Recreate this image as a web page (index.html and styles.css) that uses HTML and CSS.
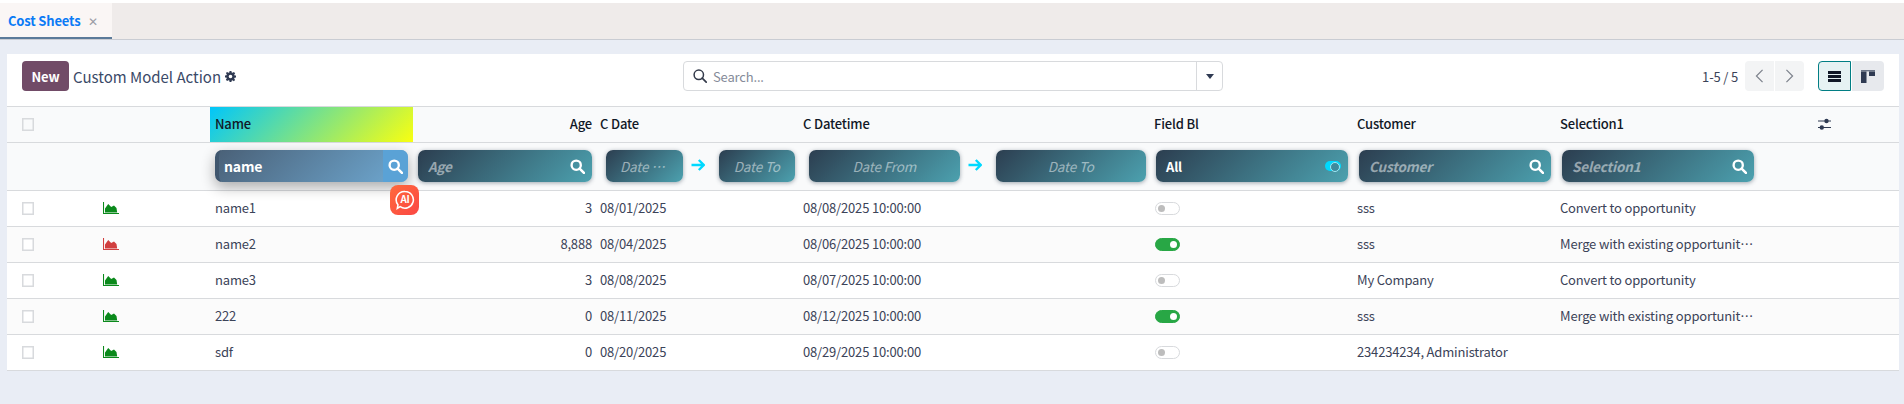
FILE: index.html
```html
<!DOCTYPE html>
<html lang="en">
<head>
<meta charset="utf-8">
<title>Cost Sheets</title>
<link rel="stylesheet" href="styles.css">
</head>
<body>
<svg class="defs" width="0" height="0" aria-hidden="true">
  <symbol id="i-search" viewBox="0 0 14 14"><circle cx="5.8" cy="5.8" r="4.3" fill="none" stroke="currentColor" stroke-width="2.2"/><path d="M9 9l4 4" fill="none" stroke="currentColor" stroke-width="2.4" stroke-linecap="round"/></symbol>
  <symbol id="i-thin" viewBox="0 0 14 14"><circle cx="5.8" cy="5.8" r="4.7" fill="none" stroke="currentColor" stroke-width="1.5"/><path d="M9.2 9.2l4 4" fill="none" stroke="currentColor" stroke-width="1.7" stroke-linecap="round"/></symbol>
  <symbol id="i-area" viewBox="0 0 16 12"><path d="M0.5 0v11.5H16" fill="none" stroke="currentColor" stroke-width="1.1"/><path d="M2 10.5V6.5L5.2 2 8.2 5 11 3.4 13.5 6 14.2 10.5Z" fill="currentColor"/></symbol>
  <symbol id="i-arrow" viewBox="0 0 14 12"><path d="M0.5 6h12M7.8 1l5 5-5 5" fill="none" stroke="currentColor" stroke-width="2.4"/></symbol>
</svg>

<nav class="tabbar">
  <div class="tab"><span class="tab-name">Cost Sheets</span><span class="tab-close">✕</span></div>
</nav>

<main class="page">
  <section class="card">
    <header class="panel">
      <div class="panel-left">
        <button class="btn-new">New</button>
        <span class="title">Custom Model Action</span>
        <svg class="gear" viewBox="0 0 12 12"><path fill-rule="evenodd" d="M5 0h2l.3 1.6 1 .4L9.7 1l1.4 1.4-1 1.4.4 1L12 5v2l-1.6.3-.4 1 1 1.4-1.4 1.4-1.4-1-1 .4L7 12H5l-.3-1.6-1-.4-1.4 1L.9 9.6l1-1.4-.4-1L0 7V5l1.6-.3.4-1-1-1.4L2.3 1l1.4 1 1-.4ZM6 4a2 2 0 1 0 0 4 2 2 0 0 0 0-4Z"/></svg>
      </div>
      <div class="searchbox">
        <svg class="search-ico"><use href="#i-thin"/></svg>
        <span class="search-ph">Search...</span>
        <span class="search-drop"><i class="caret"></i></span>
      </div>
      <div class="panel-right">
        <span class="pager-text">1-5 / 5</span>
        <div class="pager">
          <button class="pg"><svg viewBox="0 0 10 16"><path d="M8.5 1L1.5 8l7 7" fill="none" stroke="currentColor" stroke-width="1.4"/></svg></button>
          <button class="pg"><svg viewBox="0 0 10 16"><path d="M1.5 1l7 7-7 7" fill="none" stroke="currentColor" stroke-width="1.4"/></svg></button>
        </div>
        <div class="views">
          <button class="view active"><span class="bars"><i></i><i></i><i></i></span></button>
          <button class="view"><svg viewBox="0 0 14 13"><path d="M0 0h14v1.4H0z" fill="#6b7486"/><path d="M0 1.4h5.5V13H0zM8 1.4h6v4.6H8z" fill="#2f3a52"/></svg></button>
        </div>
      </div>
    </header>

    <table class="list">
      <colgroup>
        <col class="c-check"><col class="c-icon"><col class="c-name"><col class="c-age"><col class="c-date"><col class="c-dt"><col class="c-bl"><col class="c-cust"><col class="c-sel"><col class="c-opt">
      </colgroup>
      <thead>
        <tr class="head">
          <th><span class="check"></span></th>
          <th></th>
          <th class="th-name">Name</th>
          <th class="num">Age</th>
          <th>C Date</th>
          <th>C Datetime</th>
          <th>Field Bl</th>
          <th>Customer</th>
          <th>Selection1</th>
          <th class="opt"><svg class="sliders" viewBox="0 0 13 12"><path d="M0 3h13M0 9.5h13" stroke="#2f3a52" stroke-width="1"/><circle cx="8.5" cy="3" r="2.2" fill="#2f3a52"/><circle cx="3.8" cy="9.5" r="2.2" fill="#2f3a52"/></svg></th>
        </tr>
        <tr class="filters">
          <td></td>
          <td></td>
          <td class="fc fc-name">
            <div class="f f-focus"><span class="f-val">name</span><span class="f-btn"><svg><use href="#i-search"/></svg></span></div>
            <div class="ai-badge"><svg viewBox="0 0 20 20"><path d="M10 2.2a7.6 7.6 0 1 1-4.4 13.8L3 17.6l.6-3.2A7.6 7.6 0 0 1 10 2.2Z" fill="none" stroke="#fff" stroke-width="1.4"/><text x="10" y="13" text-anchor="middle" class="ai-text">AI</text></svg></div>
          </td>
          <td class="fc fc-age"><div class="f"><span class="f-ph">Age</span><svg class="f-ico"><use href="#i-search"/></svg></div></td>
          <td class="fc fc-range"><div class="range"><div class="f f-c"><span class="f-ph">Date From</span></div><svg class="arrow"><use href="#i-arrow"/></svg><div class="f f-c"><span class="f-ph">Date To</span></div></div></td>
          <td class="fc fc-range"><div class="range"><div class="f f-c"><span class="f-ph">Date From</span></div><svg class="arrow"><use href="#i-arrow"/></svg><div class="f f-c"><span class="f-ph">Date To</span></div></div></td>
          <td class="fc"><div class="f"><span class="f-all">All</span><span class="mini-toggle"></span></div></td>
          <td class="fc"><div class="f"><span class="f-ph">Customer</span><svg class="f-ico"><use href="#i-search"/></svg></div></td>
          <td class="fc"><div class="f"><span class="f-ph">Selection1</span><svg class="f-ico"><use href="#i-search"/></svg></div></td>
          <td></td>
        </tr>
      </thead>
      <tbody>
        <tr>
          <td><span class="check"></span></td>
          <td class="ic"><svg class="area good"><use href="#i-area"/></svg></td>
          <td class="pad nm">name1</td><td class="num">3</td><td class="pad">08/01/2025</td><td class="pad">08/08/2025 10:00:00</td>
          <td class="pad"><span class="toggle"></span></td><td class="pad">sss</td><td class="pad sel">Convert to opportunity</td><td></td>
        </tr>
        <tr>
          <td><span class="check"></span></td>
          <td class="ic"><svg class="area bad"><use href="#i-area"/></svg></td>
          <td class="pad nm">name2</td><td class="num">8,888</td><td class="pad">08/04/2025</td><td class="pad">08/06/2025 10:00:00</td>
          <td class="pad"><span class="toggle on"></span></td><td class="pad">sss</td><td class="pad sel">Merge with existing opportunities</td><td></td>
        </tr>
        <tr>
          <td><span class="check"></span></td>
          <td class="ic"><svg class="area good"><use href="#i-area"/></svg></td>
          <td class="pad nm">name3</td><td class="num">3</td><td class="pad">08/08/2025</td><td class="pad">08/07/2025 10:00:00</td>
          <td class="pad"><span class="toggle"></span></td><td class="pad">My Company</td><td class="pad sel">Convert to opportunity</td><td></td>
        </tr>
        <tr>
          <td><span class="check"></span></td>
          <td class="ic"><svg class="area good"><use href="#i-area"/></svg></td>
          <td class="pad nm">222</td><td class="num">0</td><td class="pad">08/11/2025</td><td class="pad">08/12/2025 10:00:00</td>
          <td class="pad"><span class="toggle on"></span></td><td class="pad">sss</td><td class="pad sel">Merge with existing opportunities</td><td></td>
        </tr>
        <tr>
          <td><span class="check"></span></td>
          <td class="ic"><svg class="area good"><use href="#i-area"/></svg></td>
          <td class="pad nm">sdf</td><td class="num">0</td><td class="pad">08/20/2025</td><td class="pad">08/29/2025 10:00:00</td>
          <td class="pad"><span class="toggle"></span></td><td class="pad">234234234, Administrator</td><td class="pad sel"></td><td></td>
        </tr>
      </tbody>
    </table>
  </section>
</main>
</body>
</html>
```

FILE: styles.css
```css
* { box-sizing: border-box; }
html, body { margin: 0; height: 100%; }
body {
  background: #e9edf5;
  font-family: "Noto Sans CJK SC", "Noto Sans", sans-serif;
  font-size: 13px;
  letter-spacing: -.17px;
  color: #3b4358;
  overflow: hidden;
  border-top: 3px solid #fff;
}
.defs { position: absolute; }
button { font-family: inherit; border: 0; padding: 0; letter-spacing: inherit; }

.tabbar {
  height: 37px;
  background: #efebea;
  border-bottom: 1px solid #c9ccd3;
  display: flex;
}
.tab {
  width: 112px;
  height: 36px;
  background: #faf6f5;
  border-bottom: 2px solid #5b7a99;
  padding-left: 8px;
  display: flex;
  align-items: center;
  gap: 8px;
}
.tab-name { color: #0b7bf5; font-weight: 700; font-size: 13px; }
.tab-close { color: #9a9ea6; font-size: 12px; }

.page { padding: 14px 5px 0 7px; }
.card { background: #fff; }

.panel {
  height: 53px;
  border-bottom: 1px solid #d8dadd;
  padding: 7px 15px 0;
  display: grid;
  grid-template-columns: 661px 540px 1fr;
  align-items: start;
}
.panel-left { display: flex; align-items: center; height: 30px; }
.btn-new {
  width: 47px;
  height: 30px;
  background: #714b67;
  color: #fff;
  border-radius: 4px;
  font-size: 13px;
  font-weight: 700;
  margin-right: 4px;
}
.title { font-size: 15px; letter-spacing: 0; color: #3b4a68; }
.gear { width: 11px; height: 11px; margin-left: 4px; fill: #2f3a52; }

.searchbox {
  height: 30px;
  border: 1px solid #d8dadd;
  border-radius: 4px;
  display: flex;
  align-items: center;
  padding-left: 9px;
}
.search-ico { width: 14px; height: 14px; color: #333a4a; }
.search-ph { margin-left: 6px; color: #858b99; flex: 1; }
.search-drop {
  width: 26px;
  height: 28px;
  border-left: 1px solid #d8dadd;
  display: flex;
  align-items: center;
  justify-content: center;
}
.caret {
  border: 4px solid transparent;
  border-top: 5px solid #2f3a52;
  border-bottom: 0;
  width: 0;
  height: 0;
}

.panel-right { display: flex; justify-content: flex-end; align-items: center; height: 30px; }
.pager-text { margin-right: 7px; }
.pager { display: flex; gap: 1px; margin-right: 14px; }
.pg {
  width: 29px;
  height: 30px;
  background: #f3f4f5;
  color: #7d828c;
  display: flex;
  align-items: center;
  justify-content: center;
}
.pg:first-child { border-radius: 4px 0 0 4px; }
.pg:last-child { border-radius: 0 4px 4px 0; }
.pg svg { width: 9px; height: 14px; }
.views { display: flex; gap: 1px; }
.view {
  width: 32px;
  height: 30px;
  background: #e7e9ed;
  border-radius: 0 4px 4px 0;
  display: flex;
  align-items: center;
  justify-content: center;
}
.view svg { width: 14px; height: 13px; }
.view.active {
  width: 33px;
  background: #e6f2f3;
  border: 1px solid #017e84;
  border-radius: 4px 0 0 4px;
}
.bars { display: flex; flex-direction: column; gap: 1px; width: 13px; }
.bars i { display: block; height: 3px; background: #111827; }

.list { border-collapse: separate; border-spacing: 0; table-layout: fixed; width: 100%; }
.c-check { width: 92px; }
.c-icon { width: 111px; }
.c-name { width: 203px; }
.c-age { width: 183px; }
.c-date { width: 203px; }
.c-dt { width: 351px; }
.c-bl { width: 203px; }
.c-cust { width: 203px; }
.c-sel { width: 203px; }
.list th, .list td { border-bottom: 1px solid #d8dadd; padding: 0; vertical-align: middle; }

.head th {
  height: 36px;
  background: #f9fafb;
  color: #111827;
  font-weight: 500;
  text-align: left;
  padding: 0 4px 2px;
}
.head .th-name { background: linear-gradient(135deg, #00c6fb, #f9ff10); padding-left: 5px; }
.head .num { text-align: right; }
.list .opt { padding-left: 59px; }
.sliders { display: block; width: 13px; height: 12px; }

.check {
  display: block;
  width: 12px;
  height: 13px;
  margin-left: 15px;
  border: 1px solid #d8dadd;
  background: #fff;
  box-shadow: inset 0 0 0 .5px #d8dadd;
}
.head th:first-child { padding: 0; }
.head .check { background: transparent; }

.filters td { height: 48px; background: #f9fafb; vertical-align: top; padding-top: 7px; }
.list .fc { padding: 7px 5px 0 6px; }
.list .fc-name { padding: 7px 5px 0 5px; position: relative; }
.list .fc-age { padding: 7px 4px 0 5px; }
.list .fc-range { padding: 7px 4px 0 10px; }
.range { display: flex; align-items: flex-start; }
.range .f { flex: 1; min-width: 0; }
.arrow { width: 14px; height: 12px; margin: 9px 14px 0 8px; color: #00d9ff; flex: none; display: block; }

.f {
  height: 32px;
  border-radius: 7px;
  background: linear-gradient(135deg, #2c3e50, #4ca1af);
  box-shadow: 0 1px 4px rgba(44, 62, 80, .45);
  display: flex;
  align-items: center;
  padding: 0 7px 0 10px;
  overflow: hidden;
}
.f-c { justify-content: center; padding: 0 14px; }
.f-ph {
  font-style: italic;
  font-weight: 700;
  color: rgba(255, 255, 255, .5);
  font-size: 13.5px;
  flex: 1;
  white-space: nowrap;
  overflow: hidden;
  text-overflow: ellipsis;
}
.f-c .f-ph { text-align: center; font-size: 13.5px; font-weight: 400; }
.f-ico { width: 15px; height: 15px; color: #fff; flex: none; }
.f-all { color: #fff; font-weight: 700; flex: 1; }
.mini-toggle {
  width: 16px;
  height: 10px;
  border-radius: 5px;
  background: #00d9ff;
  position: relative;
}
.mini-toggle::after {
  content: "";
  position: absolute;
  right: 1px;
  top: 1px;
  width: 8px;
  height: 8px;
  border-radius: 50%;
  background: #3f8a9c;
  border: 1.5px solid #9fe9f5;
}
.f-focus {
  background: linear-gradient(135deg, #4a6178, #6fa9d2);
  box-shadow: 0 5px 14px rgba(0, 0, 0, .32);
  border-left: 4px solid #3f566e;
  padding: 0;
}
.f-val { color: #fff; font-weight: 700; font-size: 14px; flex: 1; padding-left: 5px; }
.f-btn {
  width: 25px;
  height: 32px;
  background: #5aa2d6;
  color: #fff;
  display: flex;
  align-items: center;
  justify-content: center;
}
.f-btn svg { width: 15px; height: 15px; }
.ai-badge {
  position: absolute;
  left: 180px;
  top: 42px;
  width: 29px;
  height: 30px;
  border-radius: 8px;
  background: linear-gradient(135deg, #ff6a3c, #fb4744);
  display: flex;
  align-items: center;
  justify-content: center;
  z-index: 2;
}
.ai-badge svg { width: 22px; height: 22px; }
.ai-text { font-size: 9px; font-weight: 700; fill: #fff; font-family: "Noto Sans CJK SC", sans-serif; }

tbody tr { height: 36px; }
tbody tr td { height: 36px; background: #fff; }
tbody tr:nth-child(even) td { background: #fbfbfb; }
.list .pad { padding: 0 4px 2px; white-space: nowrap; overflow: hidden; text-overflow: ellipsis; }
.list .nm { padding-left: 5px; }
.list td.num { text-align: right; padding: 0 4px 2px; }
.area { display: block; width: 16px; height: 12px; margin: 0 0 2px 4px; }
.good { color: #0b8a1c; }
.bad { color: #d13f3f; }

.toggle {
  display: block;
  width: 25px;
  height: 13px;
  border-radius: 7px;
  border: 1px solid #d8dadd;
  background: #fff;
  position: relative;
  margin: 2px 0 0 1px;
}
.toggle::after {
  content: "";
  position: absolute;
  left: 2px;
  top: 2px;
  width: 7px;
  height: 7px;
  border-radius: 50%;
  background: #bdbdbd;
}
.toggle.on { background: #28a745; border-color: #28a745; }
.toggle.on::after { left: auto; right: 2px; background: #fff; }
```
